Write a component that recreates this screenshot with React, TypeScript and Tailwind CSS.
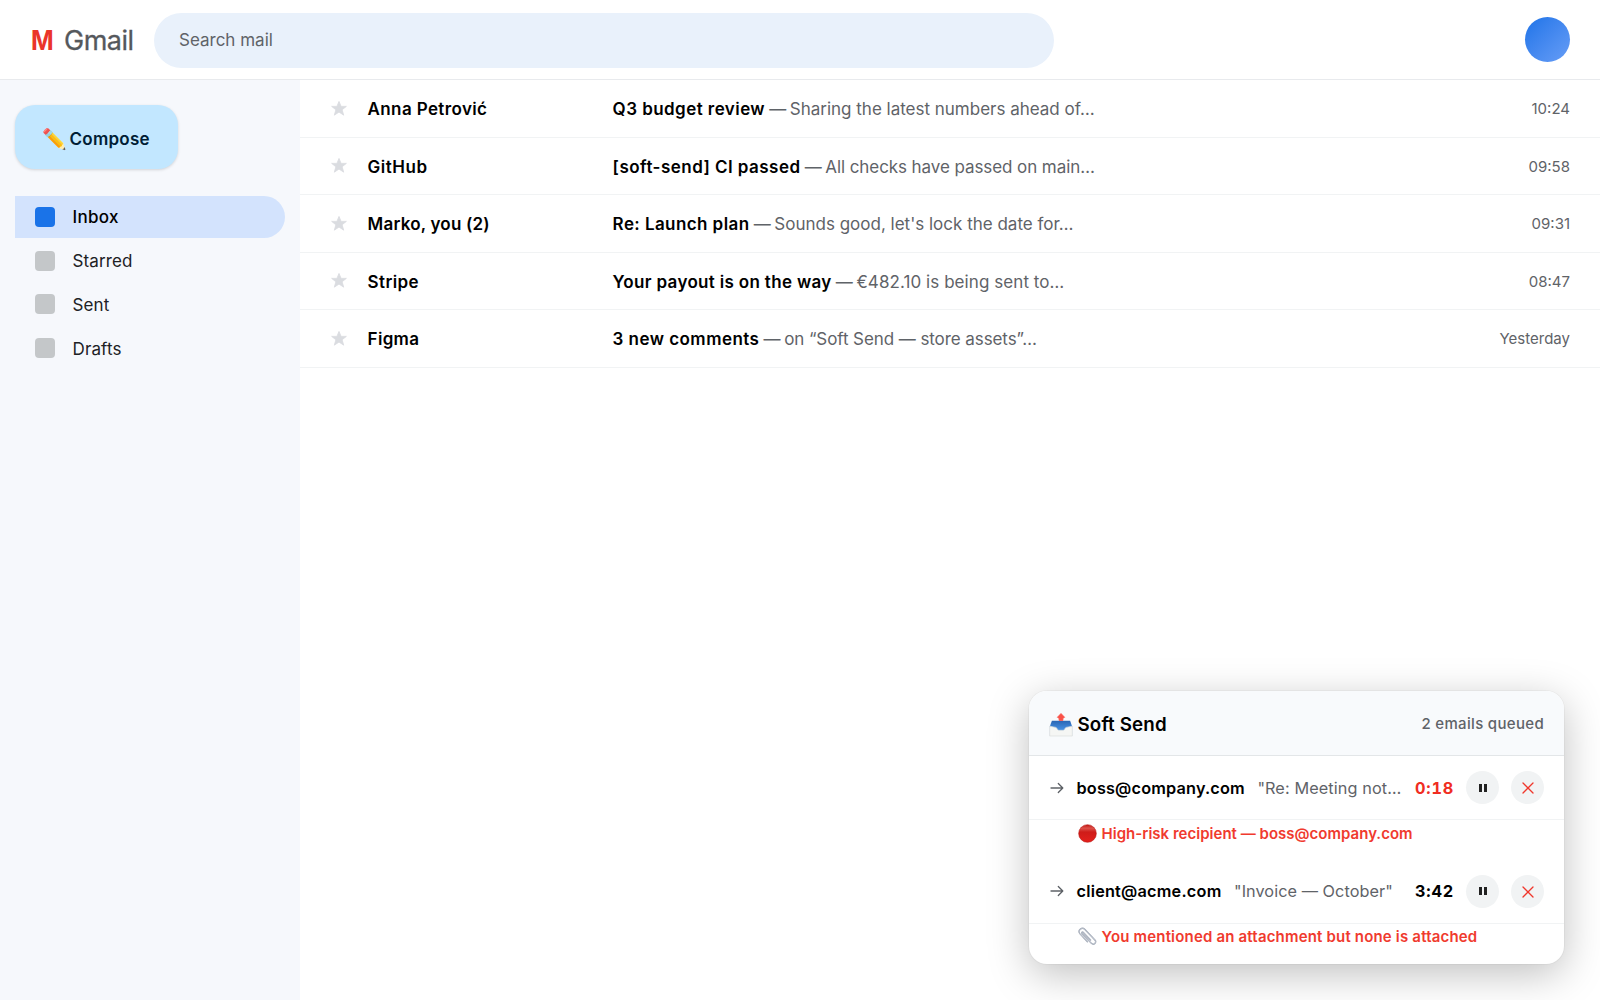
type Mail = {
  from: string;
  fromTracking: string;
  subject: string;
  subjectTracking: string;
  snippet: string;
  snippetTracking: string;
  time: string;
};

const mails: Mail[] = [
  { from: "Anna Petrović", fromTracking: "tracking-[0.38px]", subject: "Q3 budget review", subjectTracking: "tracking-[0.44px]", snippet: "Sharing the latest numbers ahead of…", snippetTracking: "tracking-[-0.01px]", time: "10:24" },
  { from: "GitHub", fromTracking: "tracking-[0.5px]", subject: "[soft-send] CI passed", subjectTracking: "tracking-[0.46px]", snippet: "All checks have passed on main…", snippetTracking: "tracking-[-0.08px]", time: "09:58" },
  { from: "Marko, you (2)", fromTracking: "tracking-[0.2px]", subject: "Re: Launch plan", subjectTracking: "tracking-[0.42px]", snippet: "Sounds good, let's lock the date for…", snippetTracking: "tracking-[0px]", time: "09:31" },
  { from: "Stripe", fromTracking: "tracking-[0.4px]", subject: "Your payout is on the way", subjectTracking: "tracking-[0.33px]", snippet: "€482.10 is being sent to…", snippetTracking: "tracking-[0.07px]", time: "08:47" },
  { from: "Figma", fromTracking: "tracking-[0.3px]", subject: "3 new comments", subjectTracking: "tracking-[0.46px]", snippet: "on “Soft Send — store assets”…", snippetTracking: "tracking-[-0.08px]", time: "Yesterday" },
];

const folders = [
  { name: "Inbox", active: true },
  { name: "Starred", active: false },
  { name: "Sent", active: false },
  { name: "Drafts", active: false },
];

function Star() {
  return (
    <svg viewBox="0 0 24 24" className="h-[17px] w-[18px] shrink-0 fill-[#dadce0] stroke-[#dadce0]" strokeWidth="1.2" strokeLinejoin="round">
      <path d="M12 2l2.9 7h7.5l-6 4.8 2.2 7.6L12 17l-6.6 4.4 2.2-7.6-6-4.8h7.5z" />
    </svg>
  );
}

function OutboxIcon() {
  return (
    <svg viewBox="0 0 24 24" className="mt-[3px] h-6 w-6 shrink-0">
      <defs>
        <linearGradient id="tray" x1="0" y1="0" x2="0" y2="1">
          <stop offset="0" stopColor="#2a66b4" />
          <stop offset=".7" stopColor="#4b97ea" />
        </linearGradient>
      </defs>
      <path d="M2.9 7.8h18.2l2 5.5v9.5H.9v-9.5z" fill="url(#tray)" />
      <path d="M.7 13.2l6.1 1.2c.8.2 1 .8 1.4 1.5.5 1 1.2 1.4 2.2 1.4h3.2c1 0 1.7-.4 2.2-1.4.4-.7.6-1.3 1.4-1.5l6.1-1.2v9.8H.7z" fill="#f5f6f4" stroke="#dcdedd" strokeWidth=".7" />
      <path d="M12 .5l3.6 3.8-1.7 1v2.1h-3.8V5.3l-1.7-1z" fill="#fa5148" stroke="#fa5148" strokeWidth=".8" strokeLinejoin="round" />
    </svg>
  );
}

function RedCircle() {
  return (
    <svg viewBox="0 0 20 20" className="h-[19px] w-[19px] shrink-0">
      <defs>
        <linearGradient id="ball" x1="0" y1="0" x2="0" y2="1">
          <stop offset="0" stopColor="#c01512" />
          <stop offset=".2" stopColor="#dd5149" />
          <stop offset=".42" stopColor="#cf1c19" />
          <stop offset="1" stopColor="#e3201c" />
        </linearGradient>
      </defs>
      <circle cx="10" cy="10" r="9.3" fill="url(#ball)" stroke="#b81512" strokeWidth=".6" />
    </svg>
  );
}

function Paperclip() {
  return (
    <svg viewBox="0 0 20 20" className="h-[19px] w-[19px] shrink-0" fill="none" strokeLinecap="round" strokeLinejoin="round">
      <path d="M13.2 13.6L5.4 5.5C4.6 4.7 3.4 5.9 4.2 6.8l9.9 10.4c2.5 2.4 6-.9 3.7-3.5L7.3 2.6C4-.6-.9 3.7 2.1 7.2l7.8 8.3" stroke="#98a0af" strokeWidth="1.4" />
      <path d="M13.2 13.6L5.4 5.5C4.6 4.7 3.4 5.9 4.2 6.8l9.9 10.4c2.5 2.4 6-.9 3.7-3.5L7.3 2.6C4-.6-.9 3.7 2.1 7.2l7.8 8.3" stroke="#d3d8e0" strokeWidth=".6" />
    </svg>
  );
}

function QueueRow({ email, emailTracking, subject, subjectTracking, time, urgent }: { email: string; emailTracking: string; subject: string; subjectTracking: string; time: string; urgent?: boolean }) {
  return (
    <div className="flex h-16 items-center border-b border-[#f1f3f4] pl-[20.5px] pr-5 text-[16.25px]">
      <svg viewBox="0 0 14 12" className="h-3 w-3.5 shrink-0" fill="none" stroke="#5f6368" strokeWidth="1.3" strokeLinecap="round" strokeLinejoin="round">
        <path d="M1 6h11.8M8.3 1.5L12.8 6l-4.5 4.5" />
      </svg>
      <span className={`ml-[13px] shrink-0 pt-px font-semibold text-black ${emailTracking}`}>{email}</span>
      <span className={`ml-[12.5px] flex-1 whitespace-nowrap pt-px text-[#5f6368] ${subjectTracking}`}>{subject}</span>
      <span className={`w-[51px] shrink-0 pt-px font-bold tracking-[0.8px] tabular-nums ${urgent ? "text-[#f02d22]" : "text-black"}`}>{time}</span>
      <button className="flex h-[33px] w-[33px] shrink-0 items-center justify-center gap-[2px] rounded-full bg-[#f1f3f4]">
        <span className="h-2 w-[3px] bg-[#222]" />
        <span className="h-2 w-[3px] bg-[#222]" />
      </button>
      <button className="ml-[12px] flex h-[33px] w-[33px] shrink-0 items-center justify-center rounded-full bg-[#f1f3f4]">
        <svg viewBox="0 0 12 12" className="mt-px h-3 w-3" fill="none" stroke="#f0372c" strokeWidth="1.3" strokeLinecap="round">
          <path d="M1 1l10 10M11 1L1 11" />
        </svg>
      </button>
    </div>
  );
}

export default function App() {
  return (
    <div className="relative flex h-[1000px] w-[1600px] flex-col overflow-hidden bg-white font-['Inter',sans-serif] text-[17px] text-[#202124]">
      <header className="flex h-20 shrink-0 items-center border-b border-[#e8eaed] pl-[30px] pr-[30px] pt-px">
        <div className="flex w-[124px] items-center pt-[3px] text-[27px] text-[#55585c]">
          <span className="w-[34px] pl-px"><span className="inline-block origin-left scale-x-90 font-bold text-[#ea3529]">M</span></span>
          <span className="tracking-[-0.5px] [-webkit-text-stroke:0.3px_#55585c]">Gmail</span>
        </div>
        <div className="flex h-[55px] w-[900px] items-center rounded-full bg-[#e9f1fb] pl-[25px] pt-0.5 text-[#5f6368]">Search mail</div>
        <div className="mb-px ml-auto h-[45px] w-[45px] rounded-full bg-linear-135 from-[#1a73e8] to-[#669df6]" />
      </header>
      <div className="flex flex-1">
        <aside className="w-[300px] shrink-0 bg-[#f6f8fc] px-[15px] pt-[25px]">
          <button className="flex h-16 w-[162.5px] items-center rounded-[20px] bg-[#c2e7ff] pl-[26px] pt-[4px] font-semibold text-[#001d35] shadow-[0_1px_3px_rgba(0,0,0,0.15)]">
            <span className="-ml-0.5 w-[30.5px] text-[20px]">✏️</span>
            <span className="pt-px tracking-[0.25px]">Compose</span>
          </button>
          <nav className="mt-[27.25px] flex flex-col gap-[2.5px]">
            {folders.map((f) => (
              <div key={f.name} className={`flex h-[41.25px] items-center gap-[17.5px] rounded-r-full pl-5 ${f.active ? "bg-[#d3e3fd] font-medium tracking-[0.3px] text-black" : "tracking-[0.12px]"}`}>
                <span className={`h-5 w-5 rounded ${f.active ? "bg-[#1a73e8]" : "bg-[#c4c7c9]"}`} />
                <span className="pt-[2.5px]">{f.name}</span>
              </div>
            ))}
          </nav>
        </aside>
        <main className="flex-1">
          {mails.map((m) => (
            <div key={m.from} className="flex h-[57.5px] items-center border-b border-[#f1f3f4] pl-[30px] pr-[30px]">
              <Star />
              <span className={`ml-[19.6px] w-[245px] pt-[3px] font-semibold text-black ${m.fromTracking}`}>{m.from}</span>
              <span className="whitespace-pre pt-[3px] text-[#5f6368]">
                <span className={`font-semibold text-black ${m.subjectTracking}`}>{m.subject}</span>
                <span className="tracking-[-0.6px]"> — </span>
                <span className={m.snippetTracking}>{m.snippet}</span>
              </span>
              <span className="ml-auto pt-[2px] text-[15px] text-[#5f6368]">{m.time}</span>
            </div>
          ))}
        </main>
      </div>
      <section className="absolute left-[1029px] top-[691px] h-[273px] w-[535px] overflow-hidden rounded-[18px] bg-white shadow-[0_10px_40px_rgba(0,0,0,0.25),0_0_0_1px_rgba(0,0,0,0.03)]">
        <div className="flex h-[65px] items-center border-b border-[#e3e6e8] bg-[#f8fafc] px-5">
          <OutboxIcon />
          <span className="ml-[4.5px] pt-[4px] text-[18.75px] font-semibold tracking-[0.14px] text-black">Soft Send</span>
          <span className="ml-auto pt-[2px] text-[15px] font-medium tracking-[0.32px] text-[#5f6368]">2 emails queued</span>
        </div>
        <QueueRow email="boss@company.com" emailTracking="tracking-[0.18px]" subject={'"Re: Meeting not…'} subjectTracking="tracking-[0.1px]" time="0:18" urgent />
        <div className="flex h-[39.5px] items-start pl-[49px] pt-1 text-[15px] font-semibold text-[#f03a2e]">
          <RedCircle />
          <span className="ml-[4.5px] leading-[19px] tracking-[0.02px]">High-risk recipient — boss@company.com</span>
        </div>
        <QueueRow email="client@acme.com" emailTracking="tracking-[0.22px]" subject={'"Invoice — October"'} subjectTracking="tracking-[0.06px]" time="3:42" />
        <div className="flex items-start pl-[49px] pt-[3px] text-[15px] font-semibold text-[#f03a2e]">
          <Paperclip />
          <span className="ml-[4.5px] leading-[19px] tracking-[0.18px]">You mentioned an attachment but none is attached</span>
        </div>
      </section>
    </div>
  );
}
